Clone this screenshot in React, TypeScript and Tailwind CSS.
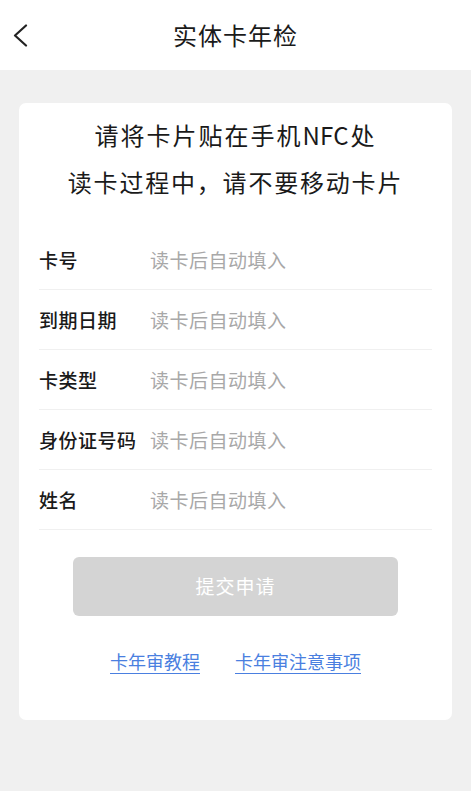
import React from "react";

const rows = ["卡号", "到期日期", "卡类型", "身份证号码", "姓名"];

export default function App() {
  return (
    <div
      className="w-[471px] h-[791px] bg-[#f0f0f0] flex flex-col"
      style={{ fontFamily: '"Noto Sans CJK SC", "Noto Sans", sans-serif' }}
    >
      <div className="h-[70px] bg-white relative flex items-center justify-center shrink-0">
        <svg
          className="absolute left-[12px] top-[24px]"
          width="17"
          height="23"
          viewBox="0 0 17 23"
          fill="none"
        >
          <path d="M14 1.5 L3 11.5 L14 21.5" stroke="#222" strokeWidth="2.2" strokeLinecap="round" strokeLinejoin="round" />
        </svg>
        <span className="text-[24px] text-[#1a1a1a] leading-none tracking-[1px]">实体卡年检</span>
      </div>
      <div className="px-[19px] pt-[33px]">
        <div className="bg-white rounded-[7px] h-[617px] flex flex-col items-center">
          <div className="pt-[16px] text-[24px] leading-[32px] text-[#1a1a1a] tracking-[2px] text-center">
            请将卡片贴在手机<span className="tracking-[0px]">NF</span>C处
          </div>
          <div className="mt-[15px] text-[24px] leading-[32px] text-[#1a1a1a] tracking-[1.8px] text-center">
            读卡过程中，请不要移动卡片
          </div>
          <div className="w-full px-[20px] mt-[32px]">
            {rows.map((r) => (
              <div key={r} className="h-[60px] flex items-center border-b border-[#f0f0f0]">
                <span className="w-[111px] text-[19px] text-[#1a1a1a] font-medium leading-none tracking-[0.5px]">{r}</span>
                <span className="text-[19px] text-[#a8a8a8] leading-none tracking-[0.5px]">读卡后自动填入</span>
              </div>
            ))}
          </div>
          <div className="mt-[27px] w-[325px] h-[59px] rounded-[6px] bg-[#d4d4d4] flex items-center justify-center">
            <span className="text-[19px] text-white tracking-[1px]">提交申请</span>
          </div>
          <div className="mt-[36px] flex gap-[35px] text-[18px] text-[#4a7fe0] leading-none">
            <span className="underline underline-offset-[4px]">卡年审教程</span>
            <span className="underline underline-offset-[4px]">卡年审注意事项</span>
          </div>
        </div>
      </div>
    </div>
  );
}
